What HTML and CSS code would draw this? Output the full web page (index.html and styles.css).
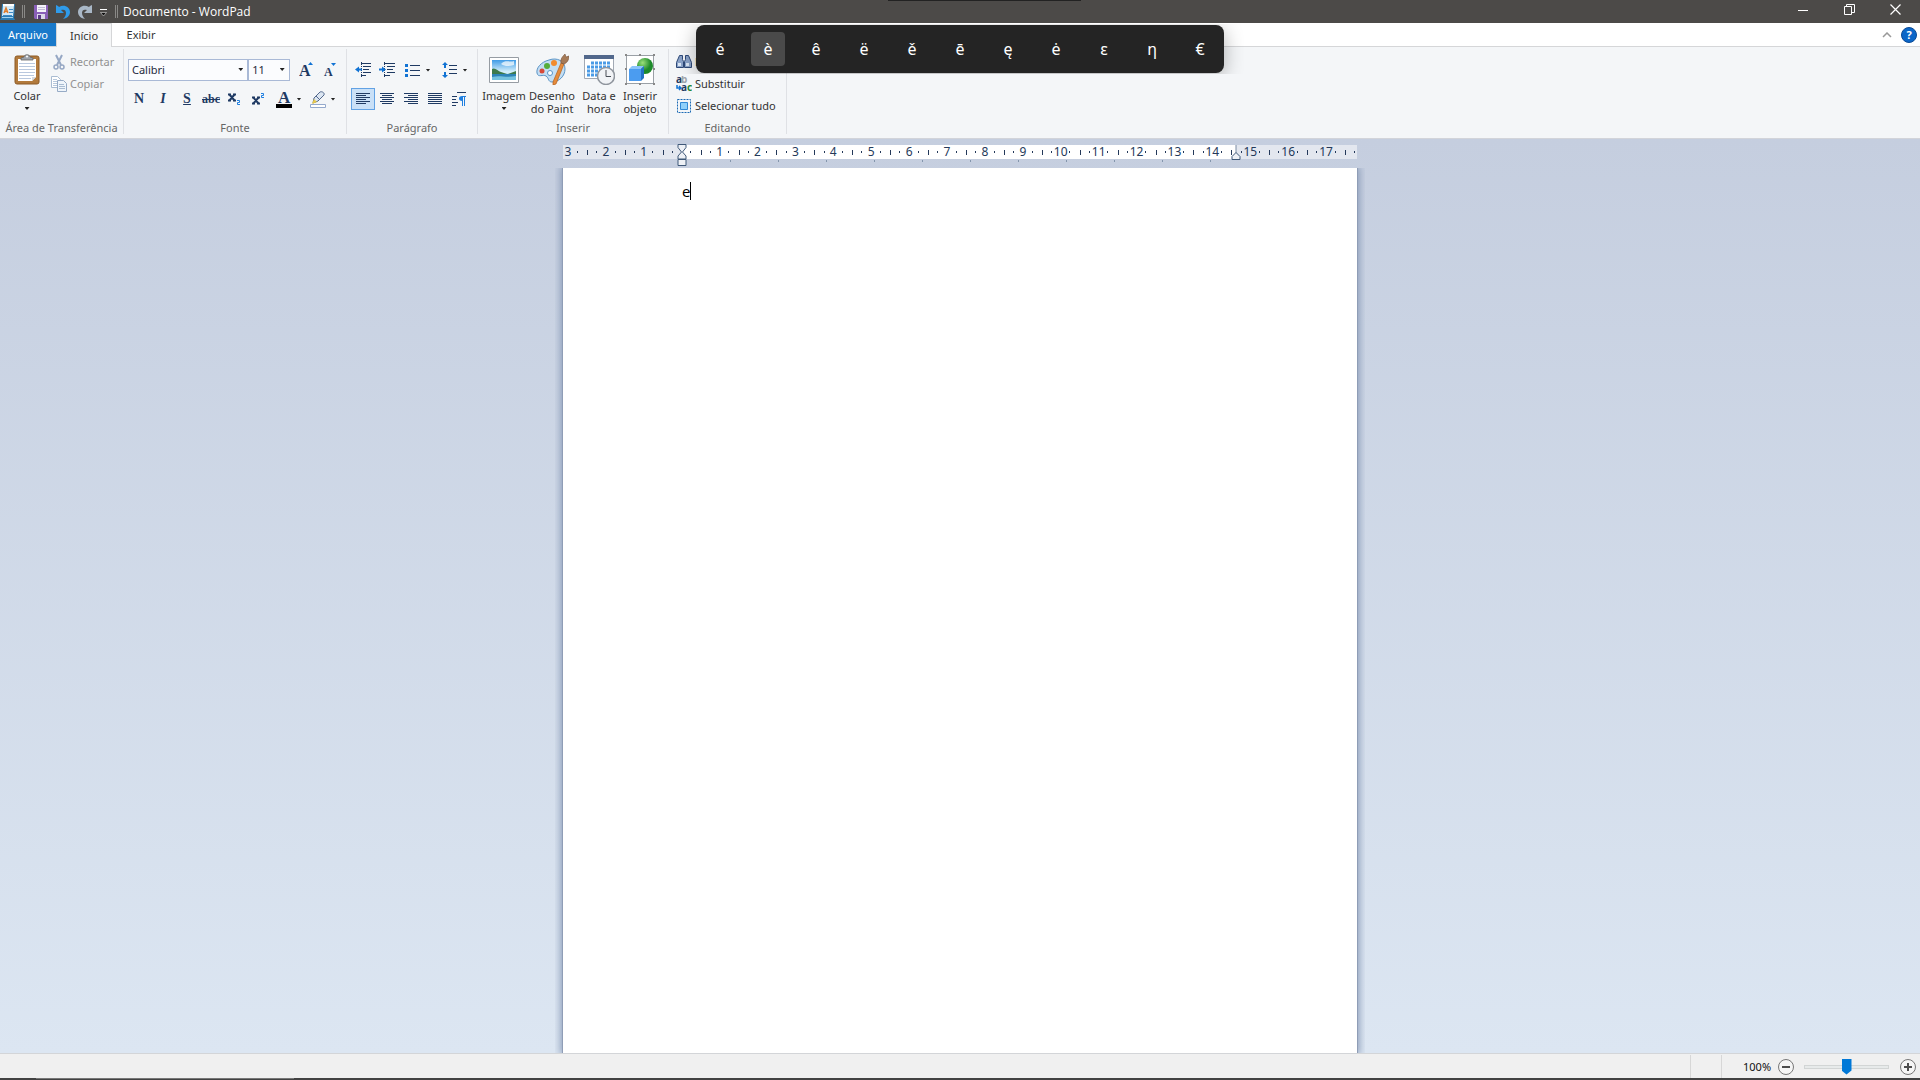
FILE: index.html
```html
<!DOCTYPE html>
<html lang="pt-BR">
<head>
<meta charset="utf-8">
<title>Documento - WordPad</title>
<link rel="stylesheet" href="styles.css">
</head>
<body>
<div class="window">
  <header class="titlebar">
    <svg class="app-icon" width="16" height="16" viewBox="0 0 16 16" aria-hidden="true"><path fill="#2b7cb4" d="M2 0h13l-1 14 1 2H0l1-2z"/><path fill="#d5eaf7" d="M3 1h11l-1 11H2z"/><path fill="#fff" d="M3 0h11v2H3z"/><path stroke="#e07b28" fill="none" stroke-width="1.4" d="M4 9l2-5 2 5M5 7.500h2"/><path stroke="#3d8ac6" d="M9 5.500h4M9 8.500h4M3 11.500h9"/><path fill="#9fd0ee" d="M2 13h11v1H2z"/></svg>
    <span class="divider"></span>
    <button class="quick" aria-label="Salvar"><svg width="14" height="14" viewBox="0 0 14 14"><path fill="#8a5fb8" d="M0 0h14v14H1l-1-1z"/><path fill="#f4f2fa" d="M3 0h9v7H3z"/><path stroke="#c2bdd8" d="M4 2.500h7M4 4.500h7"/><path fill="#dcd8ea" d="M3 9h8v5H3z"/><path fill="#5b3a87" d="M4 10h3v4H4z"/></svg></button>
    <button class="quick" aria-label="Desfazer"><svg width="15" height="15" viewBox="0 0 15 15"><path fill="#2f9bea" d="M0 1l2 1 1 1C8 0 14 3 14 8c0 3-2 6-7 7 2-2 3-4 3-6 0-3-2-4-5-3l3 3H0z"/></svg></button>
    <button class="quick" aria-label="Refazer"><svg width="15" height="15" viewBox="0 0 15 15"><path fill="#a9b7c6" d="M14 1l-2 1-1 1C6 0 0 3 0 8c0 3 2 6 7 7-2-2-3-4-3-6 0-3 2-4 5-3L6 9h8z"/></svg></button>
    <button class="quick narrow" aria-label="Personalizar"><svg width="8" height="8" viewBox="0 0 8 8"><path stroke="#fff" d="M0 .5h7"/><path fill="#111" stroke="#ddd" stroke-width=".6" d="M.5 3.500h6l-3 3.500z"/></svg></button>
    <span class="divider"></span>
    <h1 class="title">Documento - WordPad</h1>
    <div class="caption">
      <button aria-label="Minimizar"><svg width="11" height="11" viewBox="0 0 11 11"><path stroke="#fff" d="M0 6.500h10"/></svg></button>
      <button aria-label="Restaurar"><svg width="11" height="11" viewBox="0 0 11 11"><path fill="none" stroke="#fff" d="M.5 2.500h7v8h-7zM2.500 2.500v-2h8v8h-3"/></svg></button>
      <button aria-label="Fechar"><svg width="11" height="11" viewBox="0 0 11 11"><path stroke="#fff" stroke-width="1.200" d="M.5.5l10 10M10.500.5l-10 10"/></svg></button>
    </div>
  </header>

  <nav class="tabs">
    <button class="tab file">Arquivo</button>
    <button class="tab active">Início</button>
    <button class="tab">Exibir</button>
    <div class="tab-tools">
      <button aria-label="Minimizar a faixa"><svg width="10" height="6" viewBox="0 0 10 6"><path fill="none" stroke="#999" stroke-width="1.500" d="M1 5l4-4 4 4"/></svg></button>
      <button class="help" aria-label="Ajuda">?</button>
    </div>
  </nav>

  <div class="ribbon">
    <section class="group clipboard">
      <div class="body">
        <button class="big paste">
          <svg width="26" height="31" viewBox="0 0 26 31"><rect x="1" y="2" width="24" height="28" rx="2" fill="#b27a3c" stroke="#8c5b27"/><path fill="#fff" d="M4 5h18v18l-4 4H4z"/><path stroke="#b9c8de" d="M5 9.500h16M5 12.500h16M5 15.500h16M5 18.500h16M5 21.500h15M5 24.500h12"/><path fill="#d6d9de" d="M22 23l-4 4v-4z"/><path fill="#9da3ab" stroke="#666" stroke-width=".8" d="M7 6V4l3-1c0-3 6-3 6 0l3 1v2z"/><circle cx="13" cy="2.500" r="1" fill="#fff"/></svg>
          <span>Colar</span><i class="arrow"></i>
        </button>
        <div class="small-list">
          <button class="small" disabled><svg width="16" height="16" viewBox="0 0 16 16"><path fill="none" stroke="#96a8c4" stroke-width="2" d="M5 1l5 10M11 1L6 11"/><circle cx="5" cy="13" r="2" fill="none" stroke="#96a8c4" stroke-width="1.500"/><circle cx="11" cy="13" r="2" fill="none" stroke="#96a8c4" stroke-width="1.500"/></svg>Recortar</button>
          <button class="small" disabled><svg width="16" height="16" viewBox="0 0 16 16"><path fill="#fff" stroke="#a9bcd2" d="M.5.5h6l3 3v8h-9z"/><path stroke="#b7c8dc" d="M2 3.500h4M2 5.500h5M2 7.500h5M2 9.500h5"/><path fill="#eff5fb" stroke="#96abc6" d="M6.500 4.500h6l3 3v8h-9z"/><path stroke="#a9bcd2" d="M8 8.500h5M8 10.500h6M8 12.500h6"/></svg>Copiar</button>
        </div>
      </div>
      <h2>Área de Transferência</h2>
    </section>

    <section class="group font">
      <div class="body rows">
        <div class="row">
          <label class="combo family"><select aria-label="Família da fonte"><option>Calibri</option></select></label>
          <label class="combo size"><select aria-label="Tamanho da fonte"><option>11</option></select></label>
          <button class="tool grow" aria-label="Aumentar fonte"><svg width="16" height="16" viewBox="0 0 16 16"><text x="0" y="14" class="glyph" font-size="16">A</text><path fill="#1173d4" d="M9 3l2.500-3L14 3z"/></svg></button>
          <button class="tool shrink" aria-label="Reduzir fonte"><svg width="16" height="16" viewBox="0 0 16 16"><text x="2" y="14" class="glyph" font-size="12">A</text><path fill="#1173d4" d="M9 1h5l-2.500 3z"/></svg></button>
        </div>
        <div class="row format">
          <button class="tool serif bold">N</button>
          <button class="tool serif italic">I</button>
          <button class="tool serif under">S</button>
          <button class="tool serif strike">abc</button>
          <button class="tool" aria-label="Subscrito"><svg width="16" height="16" viewBox="0 0 16 16"><path stroke="#1f3a63" stroke-width="2" d="M2 3l6 7M8 3l-6 7M1 3.500h3M6 3.500h3M1 9.500h3M6 9.500h3"/><path fill="none" stroke="#1f7fe0" d="M10 9.500h2.500v2h-2v2H13"/></svg></button>
          <button class="tool" aria-label="Sobrescrito"><svg width="16" height="16" viewBox="0 0 16 16"><path stroke="#1f3a63" stroke-width="2" d="M2 6l6 7M8 6l-6 7M1 6.500h3M6 6.500h3M1 12.500h3M6 12.500h3"/><path fill="none" stroke="#1f7fe0" d="M10 2.500h2.500v2h-2v2H13"/></svg></button>
          <button class="tool split" aria-label="Cor do texto"><svg width="16" height="17" viewBox="0 0 16 17"><text x="2" y="12" class="glyph" font-size="17">A</text><path d="M0 13h16v4H0z"/></svg><i class="arrow"></i></button>
          <button class="tool split" aria-label="Cor de realce"><svg width="16" height="17" viewBox="0 0 16 17"><path fill="#fff" stroke="#94a9cc" d="M.5 13.500h15v3H.5z"/><path fill="#dce6f2" stroke="#53688c" d="M4 7l6-6c2-1 5 1 4 3L8 10l-5 2z"/><path stroke="#53688c" d="M6 5l4 4"/><path fill="#e8c94a" d="M2 13l2-5 3 3z"/></svg><i class="arrow"></i></button>
        </div>
      </div>
      <h2>Fonte</h2>
    </section>

    <section class="group paragraph">
      <div class="body rows">
        <div class="row">
          <button class="tool" aria-label="Diminuir recuo"><svg width="16" height="16" viewBox="0 0 16 16"><path stroke="#1f3a63" d="M6 1.500h10M8 4.500h8M8 7.500h6M8 10.500h8M6 13.500h5"/><path stroke="#1f3a63" stroke-dasharray="1 1" d="M6.500 0v16"/><path fill="#1173d4" d="M0 7.500l4-3v2h3v2H4v2z"/></svg></button>
          <button class="tool" aria-label="Aumentar recuo"><svg width="16" height="16" viewBox="0 0 16 16"><path stroke="#1f3a63" d="M5 1.500h11M8 4.500h8M8 7.500h6M8 10.500h8M5 13.500h6"/><path stroke="#1f3a63" stroke-dasharray="1 1" d="M5.500 0v16"/><path fill="#1173d4" d="M7 7.500l-4-3v2H0v2h3v2z"/></svg></button>
          <button class="tool split" aria-label="Marcadores"><svg width="16" height="16" viewBox="0 0 16 16"><path stroke="#1f3a63" d="M5 3.500h10M5 8.500h10M5 13.500h10"/><path fill="#1173d4" d="M0 2h3v3H0zM0 7h3v3H0zM0 12h3v3H0z"/></svg><i class="arrow"></i></button>
          <button class="tool split" aria-label="Espaçamento"><svg width="16" height="16" viewBox="0 0 16 16"><path stroke="#1f3a63" d="M7 3.500h8M7 7.500h8M7 11.500h8"/><path fill="#1173d4" d="M3 0l3 3H4v3H2V3H0zM3 16l3-3H4v-3H2v3H0z"/></svg><i class="arrow"></i></button>
        </div>
        <div class="row">
          <button class="tool pressed" aria-label="Alinhar à esquerda"><svg width="14" height="12" viewBox="0 0 14 12"><path stroke="#1f3a63" d="M0 .5h14M0 2.500h10M0 4.500h14M0 6.500h10M0 8.500h14M0 10.500h10"/></svg></button>
          <button class="tool" aria-label="Centralizar"><svg width="14" height="12" viewBox="0 0 14 12"><path stroke="#1f3a63" d="M0 .5h14M2 2.500h10M0 4.500h14M2 6.500h10M0 8.500h14M2 10.500h10"/></svg></button>
          <button class="tool" aria-label="Alinhar à direita"><svg width="14" height="12" viewBox="0 0 14 12"><path stroke="#1f3a63" d="M0 .5h14M4 2.500h10M0 4.500h14M4 6.500h10M0 8.500h14M4 10.500h10"/></svg></button>
          <button class="tool" aria-label="Justificar"><svg width="14" height="12" viewBox="0 0 14 12"><path stroke="#1f3a63" d="M0 .5h14M0 2.500h14M0 4.500h14M0 6.500h14M0 8.500h14M0 10.500h14"/></svg></button>
          <button class="tool" aria-label="Parágrafo"><svg width="14" height="14" viewBox="0 0 14 14"><path stroke="#1f3a63" d="M5 .5h9M0 4.500h5M0 7.500h4M0 10.500h6M0 13.500h4"/><path fill="#1f7fe0" d="M14 4v1h-1v9h-1V5h-1v9h-1v-5c-4 0-4-5 0-5z"/></svg></button>
        </div>
      </div>
      <h2>Parágrafo</h2>
    </section>

    <section class="group insert">
      <div class="body">
        <button class="big">
          <svg width="30" height="31" viewBox="0 0 30 31"><defs><linearGradient id="sky" x2="0" y2="1"><stop offset="0" stop-color="#3f9be6"/><stop offset=".6" stop-color="#d8f1fb"/><stop offset="1" stop-color="#6fb6d8"/></linearGradient></defs><path fill="#fff" stroke="#969ca3" d="M.5 3.500h29v25H.5z"/><path fill="url(#sky)" d="M3 6h24v20H3z"/><path fill="#fff" opacity=".7" d="M12 10c5-5 9-1 13-3v4c-5 1-8 2-13-1z"/><path fill="#3d7a4b" d="M3 15c3-2 6 2 9 3l6 2H3zM27 17l-8 3h8z"/><path fill="#2d83b7" d="M3 20h24v6H3z"/><path fill="#74c2de" d="M3 23c8-2 14 1 24-1v4H3z"/></svg>
          <span>Imagem</span><i class="arrow"></i>
        </button>
        <button class="big">
          <svg width="34" height="31" viewBox="0 0 34 31"><path fill="#c3def4" stroke="#5993c5" d="M14 6c8-3 16 1 16 9 0 7-6 13-13 13-4 0-3-4-6-6s-8 2-9-3C1 14 6 8 14 6z"/><circle cx="12" cy="12" r="3" fill="#55ad3b"/><circle cx="19" cy="9" r="3" fill="#f28b2e"/><circle cx="7" cy="17" r="2.500" fill="#d84a3a"/><circle cx="15" cy="19" r="2.500" fill="#fff" stroke="#5993c5"/><path fill="#e58b3c" stroke="#b3601b" stroke-width=".7" d="M26 9l3 1-8 20-3 1v-3z"/><path fill="#a67a57" stroke="#765139" stroke-width=".6" d="M26 9c-1-4 2-7 4-9l1 3 3-1c0 4-2 7-5 8z"/></svg>
          <span>Desenho<br>do Paint</span>
        </button>
        <button class="big date">
          <svg width="31" height="31" viewBox="0 0 31 31"><path fill="#fff" stroke="#a2a9b4" d="M.5 1.500h29v23H.5z"/><path fill="#52688c" d="M0 1h30v4H0z"/><path stroke="#4b9be6" stroke-width="3" stroke-dasharray="3 1" d="M7 9h20M3 13h24M3 17h24M3 21h16"/><circle cx="22" cy="22" r="8.500" fill="#f1f3f6" stroke="#8f959d" stroke-width="1.500"/><path fill="none" stroke="#4a4f57" d="M22 16v6.500h5"/></svg>
          <span>Data e<br>hora</span>
        </button>
        <button class="big">
          <svg width="30" height="31" viewBox="0 0 30 31"><defs><radialGradient id="ball" cx=".35" cy=".3"><stop offset="0" stop-color="#9be07a"/><stop offset="1" stop-color="#1e8a2b"/></radialGradient></defs><path fill="#fff" stroke="#9aa0a6" d="M1.500 1.500h27v28h-27z"/><circle cx="20" cy="12" r="8" fill="url(#ball)"/><path fill="#4b9cf0" d="M4 15h12v12H4z"/><path fill="#8ac4fb" d="M4 15l3-3h12l-3 3z"/><path fill="#2372c6" d="M16 15l3-3v12l-3 3z"/><path fill="#888" d="M0 0h2v2H0zM14 0h2v2h-2zM28 0h2v2h-2zM0 14h2v2H0zM28 14h2v2h-2zM0 29h2v2H0zM14 29h2v2h-2zM28 29h2v2h-2z"/></svg>
          <span>Inserir<br>objeto</span>
        </button>
      </div>
      <h2>Inserir</h2>
    </section>

    <section class="group editing">
      <div class="body">
        <div class="small-list">
          <button class="small"><svg width="16" height="16" viewBox="0 0 16 16"><path fill="#8ba3c9" stroke="#2e4978" d="M3.500 1.500h3v4l1 2v6h-7v-5zM12.500 1.500h-3v4l-1 2v6h7v-5z"/><path fill="#dce8f7" d="M2 9h3v3H2zM10 9h3v3h-3z"/></svg>Localizar</button>
          <button class="small"><svg width="16" height="16" viewBox="0 0 16 16"><text x="0" y="7" class="mini" fill="#1f3a63">a</text><text x="5" y="7" class="mini" fill="#a0a4aa">b</text><text x="5" y="15" class="mini" fill="#1f3a63">a</text><text x="11" y="15" class="mini" fill="#26873a">c</text><path fill="none" stroke="#1173d4" stroke-width="1.500" d="M1 9v3h4M3 10l2 2-2 2"/></svg>Substituir</button>
          <button class="small"><svg width="16" height="16" viewBox="0 0 16 16"><path fill="none" stroke="#1b6ab5" stroke-dasharray="2 1" d="M1.500 1.500h13v13h-13z"/><path fill="#8fd0fa" stroke="#3189d6" d="M4.500 4.500h7v7h-7z"/></svg>Selecionar tudo</button>
        </div>
      </div>
      <h2>Editando</h2>
    </section>
  </div>

  <main class="workspace">
    <div class="ruler">
      <div class="scale">
        <ol class="marks"><li>3</li><li>2</li><li>1</li><li></li><li>1</li><li>2</li><li>3</li><li>4</li><li>5</li><li>6</li><li>7</li><li>8</li><li>9</li><li>10</li><li>11</li><li>12</li><li>13</li><li>14</li><li>15</li><li>16</li><li>17</li><li></li></ol>
      </div>
      <div class="stops"></div>
      <svg class="indent left" width="10" height="24" viewBox="0 0 10 24" aria-hidden="true"><path fill="#eef1f6" stroke="#3f5878" d="M1 1.500h8v3L5.500 9 9 13v3H1v-3l3.500-4L1 4.500z"/><path fill="#eef1f6" stroke="#3f5878" d="M1 16.500h8v6H1z"/></svg>
      <svg class="indent right" width="10" height="16" viewBox="0 0 10 16" aria-hidden="true"><path stroke="#7b8ba3" d="M5 0v8"/><path fill="#eef1f6" stroke="#3f5878" d="M1 14.500h8v-3L5 7.500l-4 4z"/></svg>
    </div>
    <article class="page" contenteditable="true" spellcheck="false"><p>e<span class="caret"></span></p></article>
  </main>

  <footer class="status">
    <span class="cell"></span>
    <span class="cell"></span>
    <label class="percent" for="zoom">100%</label>
    <button class="round" aria-label="Reduzir"><svg width="16" height="16" viewBox="0 0 16 16"><circle cx="8" cy="8" r="7.500" fill="#f6f6f6" stroke="#777"/><path fill="#4d4d4d" d="M4 7h8v2H4z"/></svg></button>
    <input class="zoom" id="zoom" type="range" min="0" max="200" value="100">
    <button class="round" aria-label="Ampliar"><svg width="16" height="16" viewBox="0 0 16 16"><circle cx="8" cy="8" r="7.500" fill="#f6f6f6" stroke="#777"/><path fill="#4d4d4d" d="M4 7h3V4h2v3h3v2H9v3H7V9H4z"/></svg></button>
  </footer>
  <div class="taskbar"><span></span></div>
</div>

<div class="top-edge"></div>
<div class="accents">
  <ul>
    <li><button>é</button></li><li><button class="chosen">è</button></li><li><button>ê</button></li><li><button>ë</button></li><li><button>ě</button></li><li><button>ē</button></li><li><button>ę</button></li><li><button>ė</button></li><li><button>ε</button></li><li><button>η</button></li><li><button>€</button></li>
  </ul>
</div>
</body>
</html>
```
FILE: styles.css
```css
* { box-sizing: border-box; }

body {
  margin: 0;
  font: 11px/16px "Noto Sans", "Open Sans", sans-serif;
  color: #333;
}

button {
  font: inherit;
  color: inherit;
  background: none;
  border: 0;
  padding: 0;
}

svg { display: block; flex: none; }
h1, h2, p, ul, ol { margin: 0; padding: 0; font: inherit; list-style: none; }

.window { display: flex; flex-direction: column; height: 100vh; overflow: hidden; }

/* Title bar */
.titlebar {
  display: flex;
  align-items: center;
  height: 23px;
  flex: none;
  background: #4c4a48;
  color: #fff;
}
.app-icon { margin: 0 6px 0 0; }
.divider { width: 3px; height: 13px; border: solid #8a8987; border-width: 0 1px; }
.quick { width: 22px; display: flex; justify-content: center; }
.divider + .quick { margin-left: 5px; }
.narrow { width: 16px; padding-top: 2px; }
.narrow + .divider { margin-left: 3px; }
.title { margin-left: 5px; font: 12px/16px "Open Sans", "Noto Sans", sans-serif; }
.caption { display: flex; margin-left: auto; height: 100%; padding-right: 2px; }
.caption button { width: 46px; display: grid; place-items: center; padding-bottom: 4px; }

/* Tabs */
.tabs {
  display: flex;
  height: 24px;
  flex: none;
  border-bottom: 1px solid #d5d6d8;
  background: #fff;
}
.tab { width: 58px; }
.tab.file { width: 56px; background: #1979ca; color: #fff; }
.tab.active {
  width: 56px;
  height: 24px;
  border: solid #d5d6d8;
  border-width: 1px 1px 0;
  background: #f5f6f7;
}
.tab-tools { display: flex; align-items: center; gap: 9px; margin-left: auto; padding-right: 3px; }
.help {
  width: 16px;
  height: 16px;
  border-radius: 50%;
  background: #0b66c8;
  border: 1px solid #0a4a96;
  color: #fff;
  font-weight: bold;
  line-height: 14px;
}

/* Ribbon */
.ribbon {
  display: flex;
  flex: none;
  padding: 2px 0 4px;
  height: 92px;
  border-bottom: 1px solid #d2d4da;
  background: #f4f6f8;
}
.group {
  display: flex;
  flex-direction: column;
  justify-content: space-between;
  border-right: 1px solid #dfe1e5;
}
.group h2 { text-align: center; line-height: 12px; color: #666; }
.body { display: flex; }
.clipboard { width: 124px; }
.font { width: 223px; padding: 0 4px; }
.paragraph { width: 131px; padding: 0 4px; }
.insert { width: 191px; }
.editing { width: 118px; }

.arrow {
  width: 5px;
  height: 3px;
  background: #222;
  clip-path: polygon(0 0, 100% 0, 50% 100%);
}

.big {
  display: flex;
  flex-direction: column;
  align-items: center;
  width: 40px;
  padding-top: 5px;
  line-height: 13px;
  white-space: nowrap;
}
.big span { margin-top: 4px; }
.big .arrow { margin-top: 5px; }
.paste { width: 54px; }
.insert .body { padding-left: 2px; }
.insert .big { width: 48px; }
.insert .date { width: 46px; }
.insert .big:last-child { width: 36px; }

.small-list { display: flex; flex-direction: column; padding-top: 2px; }
.small { display: flex; align-items: center; gap: 3px; height: 22px; white-space: nowrap; }
.small:disabled { color: #919191; }
.clipboard .small-list { margin-left: -3px; }
.editing .small-list { padding-left: 7px; }

.rows { flex-direction: column; padding-top: 10px; gap: 7px; }
.row { display: flex; height: 22px; }
.combo { position: relative; display: flex; }
.combo select {
  appearance: none;
  width: 100%;
  height: 22px;
  border: 1px solid #a9b9d6;
  border-radius: 0;
  background: #fbfcfe;
  padding: 0 3px;
  font: inherit;
  color: #1e2a3c;
}
.combo::after {
  content: "";
  position: absolute;
  right: 5px;
  top: 9px;
  width: 5px;
  height: 3px;
  background: #222;
  clip-path: polygon(0 0, 100% 0, 50% 100%);
}
.combo.family { width: 122px; }
.combo.size { width: 42px; }
.grow { margin-left: 5px; }
.shrink { width: 20px; }

.tool {
  display: flex;
  align-items: center;
  justify-content: center;
  gap: 5px;
  width: 24px;
  height: 22px;
  color: #1f3a63;
}
.format { margin-left: -1px; }
.split { width: 33px; }
.format .tool + .split { margin-left: 1px; }
.paragraph .split { width: 37px; }
.pressed { background: #c9e0f7; border: 1px solid #62a2e4; }
.serif { font: bold 14px/16px "Liberation Serif", serif; }
.italic { font-style: italic; }
.under { text-decoration: underline; }
.strike { text-decoration: line-through; font-size: 12px; }
.glyph { font-family: "Liberation Serif", serif; font-weight: bold; fill: #1f3a63; }
.mini { font: bold 10px "Noto Sans", sans-serif; }

/* Workspace */
.workspace {
  display: flex;
  flex-direction: column;
  align-items: center;
  flex: 1;
  min-height: 0;
  background: linear-gradient(#c5cedf, #dce6f2);
}
.ruler { position: relative; width: 794px; height: 29px; padding-top: 6px; flex: none; }
.scale {
  height: 14px;
  overflow: hidden;
  background: linear-gradient(90deg, #e3e7ef 119px, #fff 119px, #fff 673px, #e3e7ef 673px);
}
.marks { display: flex; width: 834px; margin-left: -14px; font-size: 12px; line-height: 14px; }
.marks li {
  flex: 1;
  height: 14px;
  text-align: center;
  color: #24395a;
  background:
    linear-gradient(#24395a, #24395a) 0 5px / 1px 5px no-repeat,
    linear-gradient(#24395a, #24395a) 25% 6px / 1px 2px no-repeat,
    linear-gradient(#24395a, #24395a) 75% 6px / 1px 2px no-repeat;
}
.stops {
  height: 2px;
  margin: 1px 145px 0 167px;
  background: repeating-linear-gradient(90deg, #8496ad 0 1px, transparent 1px 48px);
}
.indent { position: absolute; }
.indent.left { left: 114px; top: 4px; }
.indent.right { left: 668px; top: 6px; }

.page {
  width: 794px;
  flex: 1;
  padding: 14px 119px;
  outline: 0;
  background: #fff;
  box-shadow: -1px 0 #8f9db6, 1px 0 #8f9db6, 0 0 8px 2px #8496b4;
  clip-path: inset(0 -8px);
  color: #000;
  font: 15px/18px "Open Sans", sans-serif;
}
.page p { display: flex; }
.caret { width: 1px; height: 18px; background: #000; }

/* Status bar */
.status {
  display: flex;
  align-items: center;
  justify-content: flex-end;
  height: 25px;
  flex: none;
  padding: 1px 4px 0 0;
  border-top: 1px solid #d3d5d8;
  background: #f0f0f0;
  color: #111;
}
.cell { width: 31px; height: 100%; border-left: 1px solid #d7d7d7; }
.cell + .cell { width: 22px; }
.percent { width: 35px; }
.zoom {
  appearance: none;
  width: 85px;
  height: 16px;
  margin: 0 11px 0 10px;
  background: none;
}
.zoom::-webkit-slider-runnable-track {
  height: 4px;
  border: 1px solid #d2d5d5;
  background: #e7eaea;
}
.zoom::-webkit-slider-thumb {
  appearance: none;
  width: 10px;
  height: 16px;
  margin-top: -7px;
  background: #0078d7;
  clip-path: polygon(0 0, 100% 0, 100% 75%, 50% 100%, 0 75%);
}
.taskbar { height: 2px; flex: none; background: #424242; padding-left: 36px; }
.taskbar span { display: block; width: 258px; height: 1px; background: #777; }

/* Overlays */
.top-edge { position: absolute; top: 0; left: 888px; width: 193px; height: 1px; background: #222; }
.accents {
  position: absolute;
  top: 24px;
  left: 50%;
  transform: translateX(-50%);
  padding: 1px 20px;
  overflow: hidden;
}
.accents ul {
  display: flex;
  height: 48px;
  border-radius: 8px;
  background: #242424;
  box-shadow: 0 4px 20px rgba(0, 0, 0, .3);
}
.accents li { width: 48px; display: grid; place-items: center; }
.accents button {
  width: 34px;
  height: 34px;
  border-radius: 4px;
  color: #fff;
  font-size: 16px;
  line-height: 20px;
}
.accents .chosen { background: #4a4a4a; }
```
